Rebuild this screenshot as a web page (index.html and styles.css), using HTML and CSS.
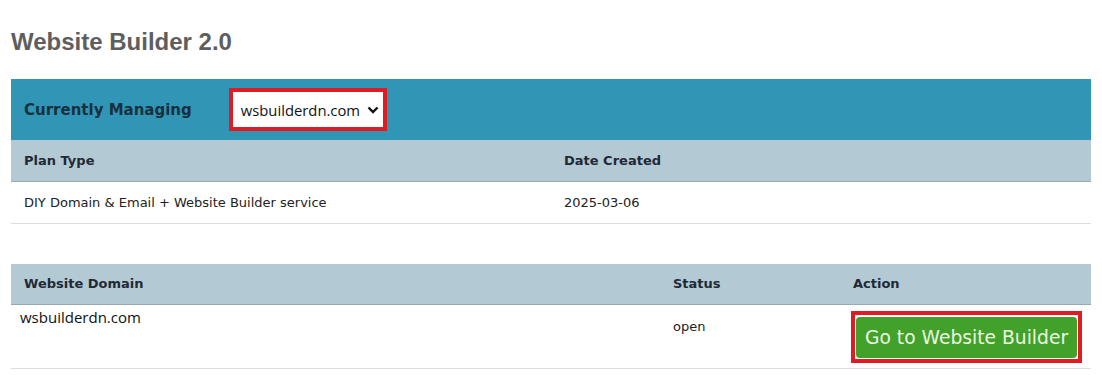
FILE: index.html
```html
<!DOCTYPE html>
<html lang="en">
<head>
  <meta charset="UTF-8" />
  <meta name="viewport" content="width=device-width, initial-scale=1.0"/>
  <title>Website Builder 2.0</title>
  <link rel="stylesheet" href="styles.css">
</head>
<body>

<!-- Page title -->
<h1 class="page-title">Website Builder 2.0</h1>

<!-- Plan table -->
<table class="grid plan-table">
  <thead>
    <tr class="managing-row">
      <th colspan="2">
        <div class="managing">
          <span class="managing-label">Currently Managing</span>
          <div class="highlight">
            <div class="domain-select">
              <span>wsbuilderdn.com</span>
              <svg width="12" height="8" viewBox="0 0 12 8"><path d="M1.5 1.5 L6 6 L10.5 1.5" fill="none" stroke="#111" stroke-width="2.4"/></svg>
            </div>
          </div>
        </div>
      </th>
    </tr>
    <tr class="head-row">
      <th class="col-plan">Plan Type</th>
      <th>Date Created</th>
    </tr>
  </thead>
  <tbody>
    <tr>
      <td>DIY Domain &amp; Email + Website Builder service</td>
      <td>2025-03-06</td>
    </tr>
  </tbody>
</table>

<!-- Website table -->
<table class="grid site-table">
  <thead>
    <tr class="head-row">
      <th class="col-domain">Website Domain</th>
      <th class="col-status">Status</th>
      <th>Action</th>
    </tr>
  </thead>
  <tbody>
    <tr class="site-row">
      <td class="domain-cell">wsbuilderdn.com</td>
      <td class="status-cell">open</td>
      <td class="action-cell">
        <div class="highlight button-box">
          <a class="go-btn" href="#">Go to Website Builder</a>
        </div>
      </td>
    </tr>
  </tbody>
</table>

</body>
</html>
```

FILE: styles.css
```css
* {
  margin: 0;
  padding: 0;
  box-sizing: border-box;
}

body {
  background-color: white;
  font-family: "DejaVu Sans", Verdana, sans-serif;
  color: #222;
  padding: 0 11px;
}

.page-title {
  font-family: "Liberation Sans", Arial, sans-serif;
  font-size: 24px;
  font-weight: bold;
  color: #5e5e5e;
  padding-top: 28px;
  height: 79px;
}

.grid {
  width: 1080px;
  border-collapse: collapse;
  font-size: 13px;
}

.grid th {
  text-align: left;
  font-weight: bold;
  color: #1f2a36;
}

.grid th,
.grid td {
  padding: 0 13px;
}

.managing-row th {
  background-color: #3195b5;
  height: 61px;
  padding: 0 13px;
}

.managing {
  display: flex;
  align-items: center;
  gap: 37px;
}

.managing-label {
  font-size: 15px;
  color: #18303f;
}

.highlight {
  border: 4px solid #e01b24;
  background: white;
}

.domain-select {
  display: flex;
  align-items: center;
  gap: 7px;
  height: 35px;
  padding: 0 4px 0 8px;
  font-family: "Open Sans", sans-serif;
  font-weight: normal;
  font-size: 14.8px;
  color: #111;
}

.head-row th {
  background-color: #b3c9d3;
  height: 41px;
  border-bottom: 1px solid #98a9b1;
}

.plan-table td {
  height: 42px;
  border-bottom: 1px solid #dddddd;
}

.col-plan {
  width: 540px;
}

.site-table {
  margin-top: 40px;
}

.col-domain {
  width: 649px;
}

.col-status {
  width: 180px;
}

.site-row td {
  height: 64px;
  border-bottom: 1px solid #dddddd;
}

.domain-cell {
  vertical-align: top;
  font-family: "Open Sans", sans-serif;
  font-size: 15px;
  color: #111;
  padding-left: 9px !important;
  padding-top: 2px !important;
}

.status-cell {
  vertical-align: top;
  padding-top: 14px !important;
}

.action-cell {
  padding: 0 0 0 11px !important;
  white-space: nowrap;
}

.button-box {
  display: inline-block;
  padding: 2px 1px 1px 1px;
  border-width: 4px;
}

.go-btn {
  display: block;
  background-color: #41a12a;
  color: #eaf8e0;
  text-decoration: none;
  font-size: 18.7px;
  line-height: 21px;
  border-radius: 4px;
  padding: 10px 9px;
}
```
